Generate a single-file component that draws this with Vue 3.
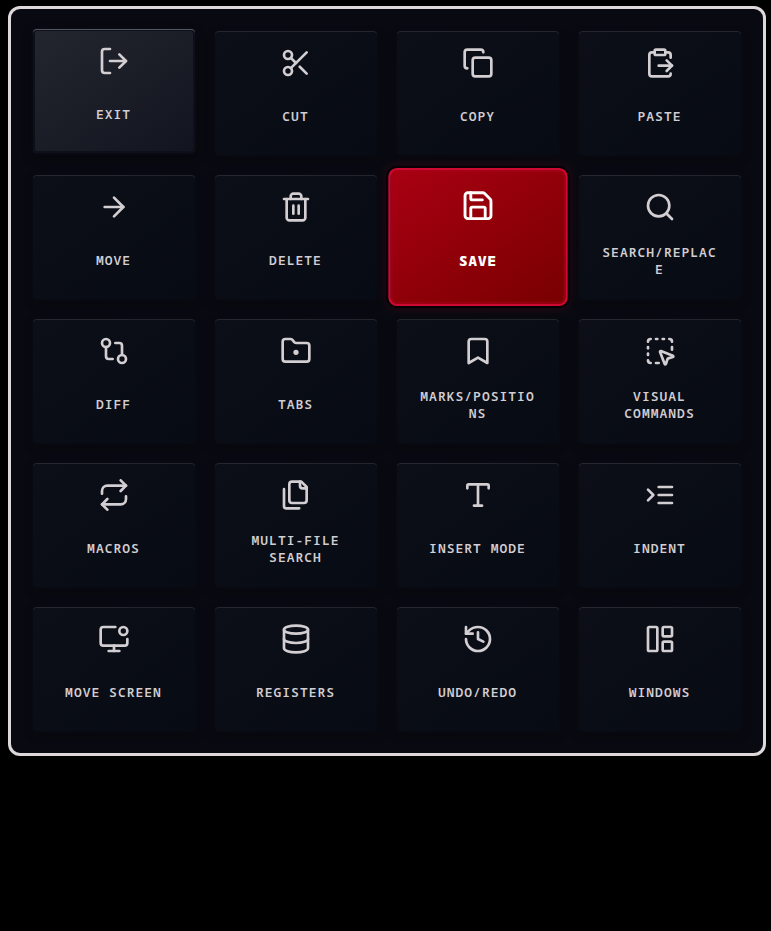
<script setup>
const commands = [
  { label: 'Exit', state: 'raised', icon: '<path d="m16 17 5-5-5-5"/><path d="M21 12H9"/><path d="M9 21H5a2 2 0 0 1-2-2V5a2 2 0 0 1 2-2h4"/>' },
  { label: 'Cut', icon: '<circle cx="6" cy="6" r="3"/><path d="M8.12 8.12 12 12"/><path d="M20 4 8.12 15.88"/><circle cx="6" cy="18" r="3"/><path d="M14.8 14.8 20 20"/>' },
  { label: 'Copy', icon: '<rect width="14" height="14" x="8" y="8" rx="2" ry="2"/><path d="M4 16c-1.1 0-2-.9-2-2V4c0-1.1.9-2 2-2h10c1.1 0 2 .9 2 2"/>' },
  { label: 'Paste', icon: '<path d="M15 2H9a1 1 0 0 0-1 1v2c0 .6.4 1 1 1h6c.6 0 1-.4 1-1V3c0-.6-.4-1-1-1Z"/><path d="M8 4H6a2 2 0 0 0-2 2v14a2 2 0 0 0 2 2h12a2 2 0 0 0 2-2M16 4h2a2 2 0 0 1 2 2v2M11 14h10"/><path d="m17 10 4 4-4 4"/>' },
  { label: 'Move', icon: '<path d="M5 12h14"/><path d="m12 5 7 7-7 7"/>' },
  { label: 'Delete', icon: '<path d="M3 6h18"/><path d="M19 6v14c0 1-1 2-2 2H7c-1 0-2-1-2-2V6"/><path d="M8 6V4c0-1 1-2 2-2h4c1 0 2 1 2 2v2"/><path d="M10 11v6"/><path d="M14 11v6"/>' },
  { label: 'Save', state: 'active', icon: '<path d="M15.2 3a2 2 0 0 1 1.4.6l3.8 3.8a2 2 0 0 1 .6 1.4V19a2 2 0 0 1-2 2H5a2 2 0 0 1-2-2V5a2 2 0 0 1 2-2z"/><path d="M17 21v-7a1 1 0 0 0-1-1H8a1 1 0 0 0-1 1v7"/><path d="M7 3v4a1 1 0 0 0 1 1h7"/>' },
  { label: 'Search/Replace', icon: '<circle cx="11" cy="11" r="8"/><path d="m21 21-4.3-4.3"/>' },
  { label: 'Diff', icon: '<circle cx="18" cy="18" r="3"/><circle cx="6" cy="6" r="3"/><path d="M13 6h3a2 2 0 0 1 2 2v7"/><path d="M11 18H8a2 2 0 0 1-2-2V9"/>' },
  { label: 'Tabs', icon: '<path d="M4 20h16a2 2 0 0 0 2-2V8a2 2 0 0 0-2-2h-7.93a2 2 0 0 1-1.66-.9l-.82-1.2A2 2 0 0 0 7.93 3H4a2 2 0 0 0-2 2v13c0 1.1.9 2 2 2Z"/><circle cx="12" cy="13" r="1"/>' },
  { label: 'Marks/Positions', icon: '<path d="m19 21-7-4-7 4V5a2 2 0 0 1 2-2h10a2 2 0 0 1 2 2v16z"/>' },
  { label: 'Visual Commands', icon: '<path d="M12.034 12.681a.498.498 0 0 1 .647-.647l9 3.5a.5.5 0 0 1-.033.943l-3.444 1.068a1 1 0 0 0-.66.66l-1.067 3.443a.5.5 0 0 1-.943.033z"/><path d="M5 3a2 2 0 0 0-2 2"/><path d="M19 3a2 2 0 0 1 2 2"/><path d="M5 21a2 2 0 0 1-2-2"/><path d="M9 3h1"/><path d="M9 21h2"/><path d="M14 3h1"/><path d="M3 9v1"/><path d="M21 9v2"/><path d="M3 14v1"/>' },
  { label: 'Macros', icon: '<path d="m17 1 4 4-4 4"/><path d="M3 11V9a4 4 0 0 1 4-4h14"/><path d="m7 23-4-4 4-4"/><path d="M21 13v2a4 4 0 0 1-4 4H3"/>' },
  { label: 'Multi-File Search', icon: '<path d="M20 7h-3a2 2 0 0 1-2-2V2"/><path d="M9 18a2 2 0 0 1-2-2V4a2 2 0 0 1 2-2h7l4 4v10a2 2 0 0 1-2 2Z"/><path d="M3 7.6v12.8A1.6 1.6 0 0 0 4.6 22h9.8"/>' },
  { label: 'Insert Mode', icon: '<path d="M12 4v16"/><path d="M4 7V5a1 1 0 0 1 1-1h14a1 1 0 0 1 1 1v2"/><path d="M9 20h6"/>' },
  { label: 'Indent', icon: '<path d="M21 12H11"/><path d="M21 18H11"/><path d="M21 6H11"/><path d="m3 8 4 4-4 4"/>' },
  { label: 'Move Screen', icon: '<circle cx="19" cy="6" r="3"/><path d="M22 12v3a2 2 0 0 1-2 2H4a2 2 0 0 1-2-2V5a2 2 0 0 1 2-2h9"/><path d="M12 17v4"/><path d="M8 21h8"/>' },
  { label: 'Registers', icon: '<ellipse cx="12" cy="5" rx="9" ry="3"/><path d="M3 5v14a9 3 0 0 0 18 0V5"/><path d="M3 12a9 3 0 0 0 18 0"/>' },
  { label: 'Undo/Redo', icon: '<path d="M3 12a9 9 0 1 0 9-9 9.75 9.75 0 0 0-6.74 2.74L3 8"/><path d="M3 3v5h5"/><path d="M12 7v5l4 2"/>' },
  { label: 'Windows', icon: '<rect width="7" height="18" x="3" y="3" rx="1"/><rect width="7" height="7" x="14" y="3" rx="1"/><rect width="7" height="7" x="14" y="14" rx="1"/>' },
]
</script>

<template>
  <main class="panel">
    <button v-for="c in commands" :key="c.label" class="card" :class="c.state">
      <svg class="icon" viewBox="0 0 24 24" v-html="c.icon"></svg>
      <span class="label">{{ c.label }}</span>
    </button>
  </main>
</template>

<style>
body {
  background: #000;
}
</style>

<style scoped>
.panel {
  box-sizing: border-box;
  width: 758px;
  height: 750px;
  margin: 6px 0 0 8px;
  padding: 20px;
  display: grid;
  grid-template-columns: repeat(4, 1fr);
  grid-template-rows: repeat(5, 1fr);
  gap: 16px;
  border: 3px solid #dfd8db;
  border-radius: 12px;
  background: #090a11;
}

.card {
  box-sizing: border-box;
  min-width: 0;
  display: flex;
  flex-direction: column;
  align-items: center;
  gap: 16px;
  margin: 0;
  padding: 16px 20px;
  border: 2px solid transparent;
  border-radius: 6px;
  color: #d3ced2;
  background: linear-gradient(145deg, #0c0f18, #070b13) padding-box;
  box-shadow: 0 4px 8px rgba(0, 0, 0, 0.18), inset 0 1px 0 rgba(255, 255, 255, 0.1);
}

.icon {
  width: 32px;
  height: 32px;
  flex: none;
  fill: none;
  stroke: currentColor;
  stroke-width: 2;
  stroke-linecap: round;
  stroke-linejoin: round;
}

.label {
  flex: 1;
  width: 121px;
  margin: 0 1px 0.8px 0;
  display: flex;
  align-items: center;
  justify-content: center;
  overflow-wrap: anywhere;
  font: 600 13px/16.9px "Noto Sans Mono", "DejaVu Sans Mono", monospace;
  letter-spacing: 1px;
  text-align: center;
  text-transform: uppercase;
}

.raised {
  position: relative;
  top: -2px;
  background: linear-gradient(145deg, #23252f, #12151f) padding-box;
  box-shadow: 0 4px 8px rgba(0, 0, 0, 0.35), inset 0 1px 0 #555760, inset 0 0 0 2px #0d1018;
}

.active {
  transform: scale(1.08);
  z-index: 1;
  padding-top: 17px;
  border-radius: 8px;
  color: #fff;
  border-color: #cf0a32;
  background: linear-gradient(145deg, #a90012, #780000);
  box-shadow: 0 0 0 2px #090006, 0 0 12px rgba(190, 0, 35, 0.22), inset 0 0 0 2px rgba(170, 0, 28, 0.55);
}

.active .label {
  margin: 0 0 4px;
  font-weight: 900;
}
</style>
